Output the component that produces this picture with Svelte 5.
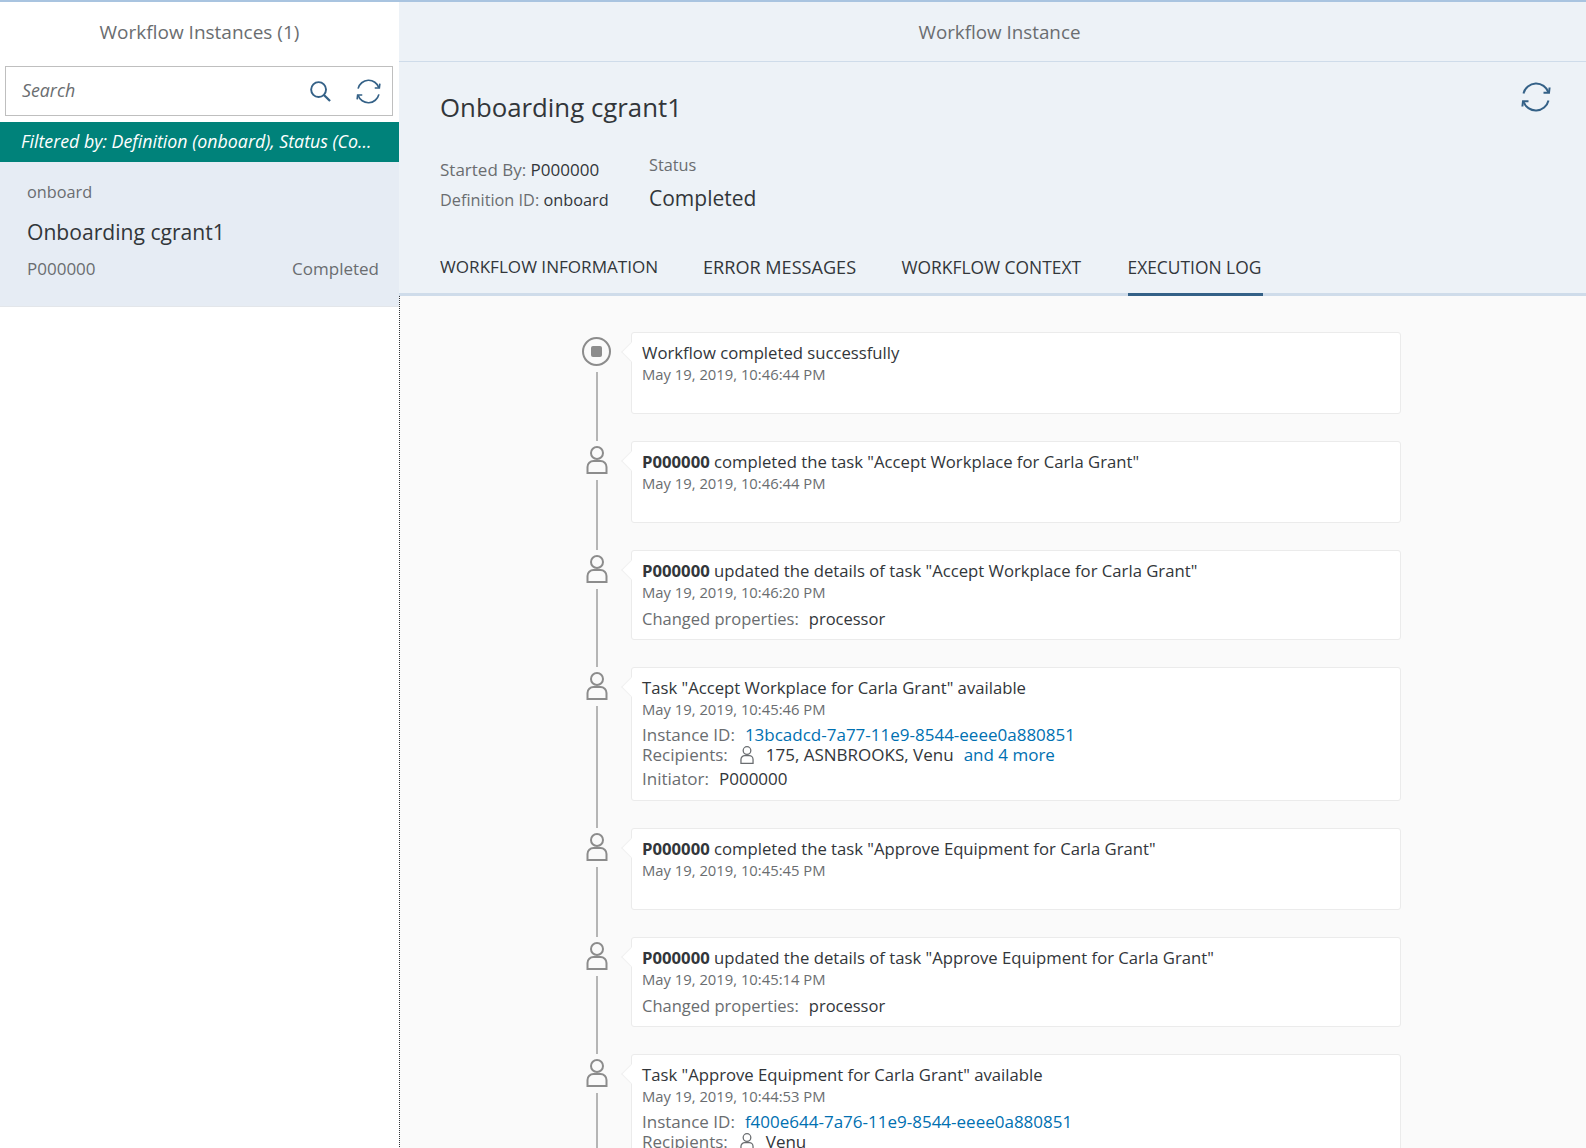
<script>
  const entries = [
    { id: 1, kind: 'end', title: 'Workflow completed successfully', time: 'May 19, 2019, 10:46:44 PM', height: 82 },
    { id: 2, bold: 'P000000', title: ' completed the task "Accept Workplace for Carla Grant"', time: 'May 19, 2019, 10:46:44 PM', height: 82 },
    { id: 3, bold: 'P000000', title: ' updated the details of task "Accept Workplace for Carla Grant"', time: 'May 19, 2019, 10:46:20 PM', changed: 'processor', height: 90 },
    {
      id: 4,
      title: 'Task "Accept Workplace for Carla Grant" available',
      time: 'May 19, 2019, 10:45:46 PM',
      instance: '13bcadcd-7a77-11e9-8544-eeee0a880851',
      recipients: '175, ASNBROOKS, Venu',
      more: 'and 4 more',
      initiator: 'P000000',
      height: 134,
    },
    { id: 5, bold: 'P000000', title: ' completed the task "Approve Equipment for Carla Grant"', time: 'May 19, 2019, 10:45:45 PM', height: 82 },
    { id: 6, bold: 'P000000', title: ' updated the details of task "Approve Equipment for Carla Grant"', time: 'May 19, 2019, 10:45:14 PM', changed: 'processor', height: 90 },
    {
      id: 7,
      title: 'Task "Approve Equipment for Carla Grant" available',
      time: 'May 19, 2019, 10:44:53 PM',
      instance: 'f400e644-7a76-11e9-8544-eeee0a880851',
      recipients: 'Venu',
      initiator: 'P000000',
      height: 134,
    },
  ];

  const tabs = [
    { label: 'WORKFLOW INFORMATION', width: 218 },
    { label: 'ERROR MESSAGES', width: 153.5 },
    { label: 'WORKFLOW CONTEXT', width: 181 },
    { label: 'EXECUTION LOG', width: 135 },
  ];
</script>

{#snippet person(cls)}
  <svg class={cls} viewBox="0 0 22 28" fill="none" stroke="currentColor" stroke-width="2">
    <circle cx="11" cy="7" r="6" />
    <path d="M1.5 27 V21 a6 6 0 0 1 6 -6 h7 a6 6 0 0 1 6 6 V27 Z" />
  </svg>
{/snippet}

{#snippet refresh(cls)}
  <svg class={cls} viewBox="0 0 30 30" fill="none" stroke="currentColor" stroke-width="2">
    <path d="M2.5 11.5 A13 13 0 0 1 27.5 10.5" />
    <path d="M22.5 10.8 L28 10.8 L28.6 5.5" />
    <path d="M27.5 18.5 A13 13 0 0 1 2.5 19.5" />
    <path d="M7.5 19.2 L2 19.2 L1.4 24.5" />
  </svg>
{/snippet}

<div class="page">
  <aside class="master">
    <header class="master-head">Workflow Instances (1)</header>
    <div class="search">
      <span class="search-text">Search</span>
      <svg class="search-icon" viewBox="0 0 22 22" fill="none" stroke="currentColor" stroke-width="2">
        <circle cx="9" cy="9" r="7.8" />
        <path d="M14.6 14.6 L21 21" stroke-width="2.4" />
      </svg>
      {@render refresh('search-refresh')}
    </div>
    <div class="filter-bar">Filtered by: Definition (onboard), Status (Co...</div>
    <div class="item">
      <div class="item-def">onboard</div>
      <div class="item-name">Onboarding cgrant1</div>
      <div class="item-foot"><span>P000000</span><span>Completed</span></div>
    </div>
  </aside>

  <main class="detail">
    <header class="detail-head">Workflow Instance</header>
    <section class="object-head">
      <div class="title-row">
        <h1>Onboarding cgrant1</h1>
        {@render refresh('main-refresh')}
      </div>
      <div class="meta">
        <div class="meta-col">
          <div class="attr started">Started By: <span>P000000</span></div>
          <div class="attr">Definition ID: <span>onboard</span></div>
        </div>
        <div class="status">
          <div class="status-label">Status</div>
          <div class="status-value">Completed</div>
        </div>
      </div>
      <nav class="tabs">
        {#each tabs as tab, i}
          <span class="tab" class:active={i === 3} style="width: {tab.width}px">{tab.label}</span>
        {/each}
      </nav>
    </section>

    <section class="log">
      {#each entries as e}
        <div class="row">
          <div class="rail">
            {#if e.kind === 'end'}
              <div class="stop"><span></span></div>
            {:else}
              {@render person('rail-person')}
            {/if}
            <div class="line"></div>
          </div>
          <article class="card" style="min-height: {e.height}px">
            <div class="card-title">{#if e.bold}<b>{e.bold}</b>{/if}{e.title}</div>
            <div class="card-time">{e.time}</div>
            {#if e.changed}
              <div class="props changed"><span class="k">Changed properties:</span><span>{e.changed}</span></div>
            {/if}
            {#if e.instance}
              <div class="props">
                <span class="k">Instance ID:</span><span class="link">{e.instance}</span>
              </div>
              <div class="props tight">
                <span class="k">Recipients:</span>
                {@render person('mini-person')}
                <span>{e.recipients}</span>
                {#if e.more}<span class="link">{e.more}</span>{/if}
              </div>
              <div class="props init">
                <span class="k">Initiator:</span><span>{e.initiator}</span>
              </div>
            {/if}
          </article>
        </div>
      {/each}
    </section>
  </main>
</div>

<style>
  :global(body) {
    margin: 0;
    background: #fff;
  }

  .page {
    display: flex;
    width: 1586px;
    height: 1148px;
    overflow: hidden;
    border-top: 2px solid #a9c4e0;
    box-sizing: border-box;
    font-family: 'Open Sans', 'Noto Sans', sans-serif;
    color: #32363a;
  }

  .master {
    width: 399px;
    flex-shrink: 0;
    background: #fff;
  }

  .master-head {
    height: 59px;
    line-height: 60px;
    text-align: center;
    font-size: 19px;
    color: #6a6d70;
  }

  .search {
    display: flex;
    align-items: center;
    height: 50px;
    margin: 5px 6px 0 5px;
    padding: 0 11px 0 16px;
    border: 1px solid #bfbfbf;
    box-sizing: border-box;
  }

  .search-text {
    flex: 1;
    padding-bottom: 2px;
    font-size: 17.8px;
    font-style: italic;
    color: #6a6d70;
  }

  .search-icon {
    width: 21px;
    height: 21px;
    margin-right: 25px;
    color: #346187;
  }

  .search-refresh {
    width: 25px;
    height: 25px;
    color: #346187;
  }

  .filter-bar {
    height: 40px;
    margin-top: 6px;
    line-height: 38px;
    padding-left: 21px;
    background: #00827a;
    color: #fff;
    font-size: 17.8px;
    font-style: italic;
    white-space: nowrap;
  }

  .item {
    height: 145px;
    padding: 19px 20px 0 27px;
    box-sizing: border-box;
    background: #e6ecf4;
    border-bottom: 1px solid #e3e6ea;
  }

  .item-def {
    font-size: 16.3px;
    line-height: 22px;
    color: #6a6d70;
  }

  .item-name {
    margin-top: 14px;
    font-size: 21.1px;
    line-height: 30px;
  }

  .item-foot {
    display: flex;
    justify-content: space-between;
    margin-top: 10px;
    font-size: 17px;
    line-height: 24px;
    color: #6a6d70;
  }

  .detail {
    flex: 1;
    min-width: 0;
    display: flex;
    flex-direction: column;
  }

  .detail-head {
    flex-shrink: 0;
    height: 59px;
    line-height: 60px;
    padding-left: 14px;
    text-align: center;
    font-size: 18.8px;
    color: #6a6d70;
    background: #edf2f7;
    border-bottom: 1px solid #cfdcea;
  }

  .object-head {
    flex-shrink: 0;
    height: 234px;
    box-sizing: border-box;
    padding: 0 0 0 41px;
    background: #edf2f7;
    border-bottom: 3px solid #cfdcea;
    display: flex;
    flex-direction: column;
  }

  .title-row {
    display: flex;
    justify-content: space-between;
    align-items: flex-start;
    padding: 25px 35px 0 0;
  }

  h1 {
    margin: 0;
    font-size: 25.8px;
    font-weight: 400;
    line-height: 40px;
  }

  .main-refresh {
    width: 30px;
    height: 30px;
    margin-top: -5px;
    color: #346187;
  }

  .meta {
    display: flex;
    margin-top: 26px;
  }

  .meta-col {
    width: 209px;
    padding-top: 1px;
  }

  .attr {
    font-size: 16.3px;
    line-height: 31px;
    color: #6a6d70;
  }

  .attr.started {
    font-size: 17px;
  }

  .attr span {
    color: #32363a;
  }

  .status-label {
    font-size: 16.3px;
    line-height: 24px;
    color: #6a6d70;
  }

  .status-value {
    margin-top: 6px;
    font-size: 21px;
    line-height: 30px;
  }

  .tabs {
    display: flex;
    gap: 45px;
    margin-top: auto;
  }

  .tab {
    height: 46px;
    line-height: 34px;
    margin-bottom: -3px;
    font-size: 17.4px;
    white-space: nowrap;
    box-sizing: border-box;
  }

  .tab:first-child {
    font-size: 17.1px;
  }

  .tab:nth-child(2) {
    font-size: 18.1px;
  }

  .tab.active {
    border-bottom: 3px solid #346187;
  }

  .log {
    flex: 1;
    padding: 36px 0 0 172px;
    background: #fafafa;
    border-left: 1px dotted #32363a;
  }

  .row {
    display: flex;
  }

  .rail {
    width: 59px;
    flex-shrink: 0;
    display: flex;
    flex-direction: column;
    align-items: center;
    padding: 5px 10px 0 0;
    box-sizing: border-box;
    color: #8c8c8c;
  }

  .rail-person {
    width: 22px;
    height: 28px;
    flex-shrink: 0;
  }

  .stop {
    width: 29px;
    height: 29px;
    flex-shrink: 0;
    box-sizing: border-box;
    border: 2px solid #8c8c8c;
    border-radius: 50%;
    display: flex;
    align-items: center;
    justify-content: center;
  }

  .stop span {
    width: 11px;
    height: 11px;
    border-radius: 2px;
    background: #8c8c8c;
  }

  .line {
    flex: 1;
    width: 2px;
    margin-top: 6px;
    background: #b5b5b5;
  }

  .card {
    position: relative;
    width: 770px;
    margin-bottom: 27px;
    padding: 9px 10px 0;
    box-sizing: border-box;
    background: #fff;
    border: 1px solid #ebebeb;
    border-radius: 3px;
  }

  .card::before {
    content: '';
    position: absolute;
    top: 12px;
    left: -8px;
    width: 14px;
    height: 14px;
    background: #fff;
    transform: rotate(45deg);
    border-left: 1px solid #f0f0f0;
    border-bottom: 1px solid #f0f0f0;
    box-sizing: border-box;
  }

  .card-title {
    position: relative;
    font-size: 16.7px;
    line-height: 22px;
  }

  .card-time {
    margin-top: 1px;
    font-size: 14.8px;
    line-height: 19px;
    color: #6a6d70;
  }

  .props {
    display: flex;
    align-items: center;
    gap: 10px;
    margin-top: 5px;
    font-size: 17px;
    line-height: 22px;
    white-space: nowrap;
  }

  .props.changed {
    margin-top: 6px;
    font-size: 16.5px;
  }

  .props.tight {
    margin-top: -2px;
  }

  .props.init {
    margin-top: 2px;
  }

  .k {
    color: #6a6d70;
  }

  .link {
    color: #0070b1;
  }

  .mini-person {
    width: 14px;
    height: 18px;
    margin: 0 2px;
    color: #6a6d70;
    flex-shrink: 0;
  }
</style>
